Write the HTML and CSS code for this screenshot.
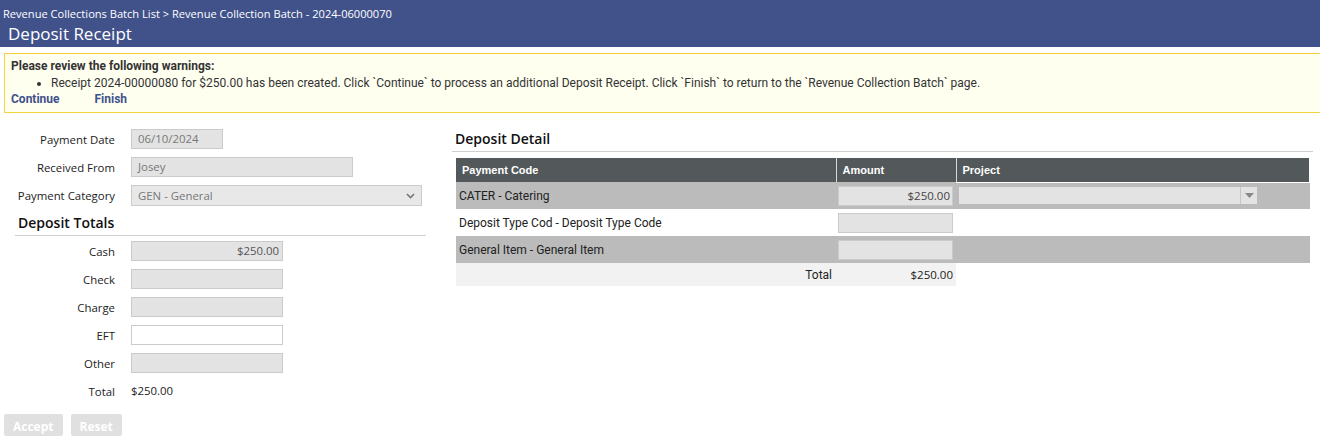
FILE: index.html
```html
<!DOCTYPE html>
<html lang="en">
    <head>
        <meta charset="UTF-8">
        <meta name="viewport" content="width=device-width, initial-scale=1.0">
        <title>Deposit Receipt</title>
        <link rel="stylesheet" href="styles.css">
    </head>
    <body>
        <div class="page-header">
            <div class="breadcrumb">Revenue Collections Batch List &gt; Revenue Collection Batch - 2024-06000070</div>
            <h1>Deposit Receipt</h1>
        </div>

        <div class="warnings">
            <div class="warnings-title">Please review the following warnings:</div>
            <ul>
                <li>Receipt 2024-00000080 for $250.00 has been created. Click `Continue` to process an additional Deposit Receipt. Click `Finish` to return to the `Revenue Collection Batch` page.</li>
            </ul>
            <div class="warning-links">
                <a href="#">Continue</a>
                <a href="#">Finish</a>
            </div>
        </div>

        <div class="content">
            <div class="left-col">
                <div class="form-grid">
                    <label>Payment Date</label>
                    <div class="field date">06/10/2024</div>
                    <label>Received From</label>
                    <div class="field wide">Josey</div>
                    <label>Payment Category</label>
                    <div class="field select">
                        <span>GEN - General</span>
                        <svg width="9" height="6" viewBox="0 0 9 6"><path d="M1 1 L4.5 4.5 L8 1" fill="none" stroke="#777" stroke-width="1.6"/></svg>
                    </div>
                </div>

                <h2 class="section-title totals-title">Deposit Totals</h2>

                <div class="form-grid totals">
                    <label>Cash</label>
                    <div class="field money">$250.00</div>
                    <label>Check</label>
                    <div class="field money"></div>
                    <label>Charge</label>
                    <div class="field money"></div>
                    <label>EFT</label>
                    <div class="field money editable"></div>
                    <label>Other</label>
                    <div class="field money"></div>
                    <label>Total</label>
                    <div class="total-value">$250.00</div>
                </div>

                <div class="actions">
                    <button class="btn" disabled>Accept</button>
                    <button class="btn" disabled>Reset</button>
                </div>
            </div>

            <div class="right-col">
                <h2 class="section-title">Deposit Detail</h2>
                <table class="detail">
                    <thead>
                        <tr>
                            <th class="c-code">Payment Code</th>
                            <th class="c-amount">Amount</th>
                            <th class="c-project">Project</th>
                        </tr>
                    </thead>
                    <tbody>
                        <tr class="alt">
                            <td>CATER - Catering</td>
                            <td class="amount-cell"><div class="field cell-input">$250.00</div></td>
                            <td class="project-cell">
                                <div class="project-select">
                                    <span class="ps-value"></span>
                                    <span class="ps-arrow"><svg width="9" height="5" viewBox="0 0 9 5"><path d="M0 0 H9 L4.5 5 Z" fill="#888"/></svg></span>
                                </div>
                            </td>
                        </tr>
                        <tr>
                            <td>Deposit Type Cod - Deposit Type Code</td>
                            <td class="amount-cell"><div class="field cell-input"></div></td>
                            <td></td>
                        </tr>
                        <tr class="alt">
                            <td>General Item - General Item</td>
                            <td class="amount-cell"><div class="field cell-input"></div></td>
                            <td></td>
                        </tr>
                        <tr class="total-row">
                            <td class="total-label">Total</td>
                            <td class="total-amount">$250.00</td>
                            <td class="blank"></td>
                        </tr>
                    </tbody>
                </table>
            </div>
        </div>
    </body>
</html>
```

FILE: styles.css
```css
body {
    margin: 0;
    font-family: "Open Sans", "Noto Sans", sans-serif;
    font-size: 11.4px;
    color: #222;
    background: #fff;
    overflow: hidden;
}

.page-header {
    background: #41528b;
    color: #fff;
    height: 47px;
    padding: 5px 0 0 3px;
    box-sizing: border-box;
}

.breadcrumb {
    font-size: 11.1px;
    line-height: 17px;
}

.page-header h1 {
    margin: 0 0 0 5px;
    font-size: 17px;
    font-weight: normal;
    line-height: 24px;
}

.warnings {
    margin: 6px 0 0 4px;
    background: #fffff0;
    border: 1px solid #f3d23d;
    border-right: none;
    padding: 5px 0 4px 6px;
    height: 49px;
    box-sizing: content-box;
    font-family: Roboto, "Liberation Sans", sans-serif;
    font-size: 12px;
    color: #333;
}

.warnings-title {
    font-weight: bold;
    line-height: 15px;
}

.warnings ul {
    margin: 0;
    padding-left: 40px;
    line-height: 18px;
}

.warning-links {
    line-height: 14px;
}

.warning-links a {
    color: #3f518c;
    font-weight: bold;
    text-decoration: none;
    margin-right: 32px;
}

.content {
    display: flex;
}

.left-col {
    width: 452px;
    padding-top: 16px;
}

.form-grid {
    display: grid;
    grid-template-columns: 115px auto;
    column-gap: 16px;
    row-gap: 8px;
    align-items: center;
}

.form-grid label {
    text-align: right;
}

.field {
    height: 20px;
    box-sizing: border-box;
    background: #e3e3e3;
    border: 1px solid #cbcbcb;
    color: #777;
    padding: 0 3px 0 6px;
    line-height: 18px;
}

.field.date {
    width: 92px;
}

.field.wide {
    width: 222px;
}

.field.select {
    width: 291px;
    height: 21px;
    background: #e8e8e8;
    display: flex;
    justify-content: space-between;
    align-items: center;
    padding-right: 6px;
}

.field.money {
    width: 152px;
    text-align: right;
    color: #555;
}

.field.editable {
    background: #fff;
}

.section-title {
    font-size: 14px;
    font-weight: 600;
    line-height: 20px;
    margin: 0;
    padding: 0 0 2px 3px;
    border-bottom: 1px solid #cfcfcf;
    color: #111;
}

.totals-title {
    margin: 7px 26px 0 15px;
}

.form-grid.totals {
    margin-top: 5px;
}

.total-value {
    line-height: 20px;
}

.actions {
    display: flex;
    gap: 8px;
    margin: 13px 0 0 4px;
}

.btn {
    background: #e0e0e0;
    border: none;
    border-radius: 2px;
    color: #fff;
    font-family: "Open Sans", sans-serif;
    font-weight: bold;
    font-size: 12px;
    height: 22px;
    padding: 3px 9px 0;
}

.right-col {
    width: 861px;
    padding-top: 16px;
}

.detail {
    margin: 6px 0 0 4px;
    width: 854px;
    table-layout: fixed;
    border-collapse: collapse;
    font-family: Roboto, "Liberation Sans", sans-serif;
    font-size: 12px;
    color: #222;
}

.detail th {
    background: #53585b;
    color: #fff;
    font-family: "Liberation Sans", Arial, sans-serif;
    font-size: 11px;
    text-align: left;
    height: 24px;
    box-sizing: border-box;
    padding: 0 6px;
    border-left: 1px solid #d8d8d8;
}

.detail th.c-code {
    width: 380px;
    border-left: none;
}

.detail th.c-amount {
    width: 120px;
}

.detail th.c-project {
    border-right: 1px solid #fff;
    border-bottom: 1px solid #fff;
}

.detail td {
    height: 27px;
    box-sizing: border-box;
    padding: 0 0 0 3px;
}

.detail tr.alt td {
    background: #bbbbbb;
}

.amount-cell {
    padding: 0 2px !important;
}

.cell-input {
    width: 115px;
    text-align: right;
    color: #444;
    font-family: "Open Sans", sans-serif;
    font-size: 11.5px;
    padding-right: 2px;
}

.project-select {
    width: 298px;
    height: 17px;
    background: #e3e3e3;
    display: flex;
    justify-content: flex-end;
}

.ps-arrow {
    width: 16px;
    border-left: 1px solid #c6c6c6;
    display: flex;
    align-items: center;
    justify-content: center;
}

.detail tr.total-row td {
    height: 23px;
    background: #f2f2f2;
}

.detail tr.total-row td.blank {
    background: #fff;
}

.total-label {
    text-align: right;
    padding-right: 4px !important;
}

.total-amount {
    text-align: right;
    padding-right: 3px !important;
    font-family: "Open Sans", sans-serif;
    font-size: 11.5px;
}
```
